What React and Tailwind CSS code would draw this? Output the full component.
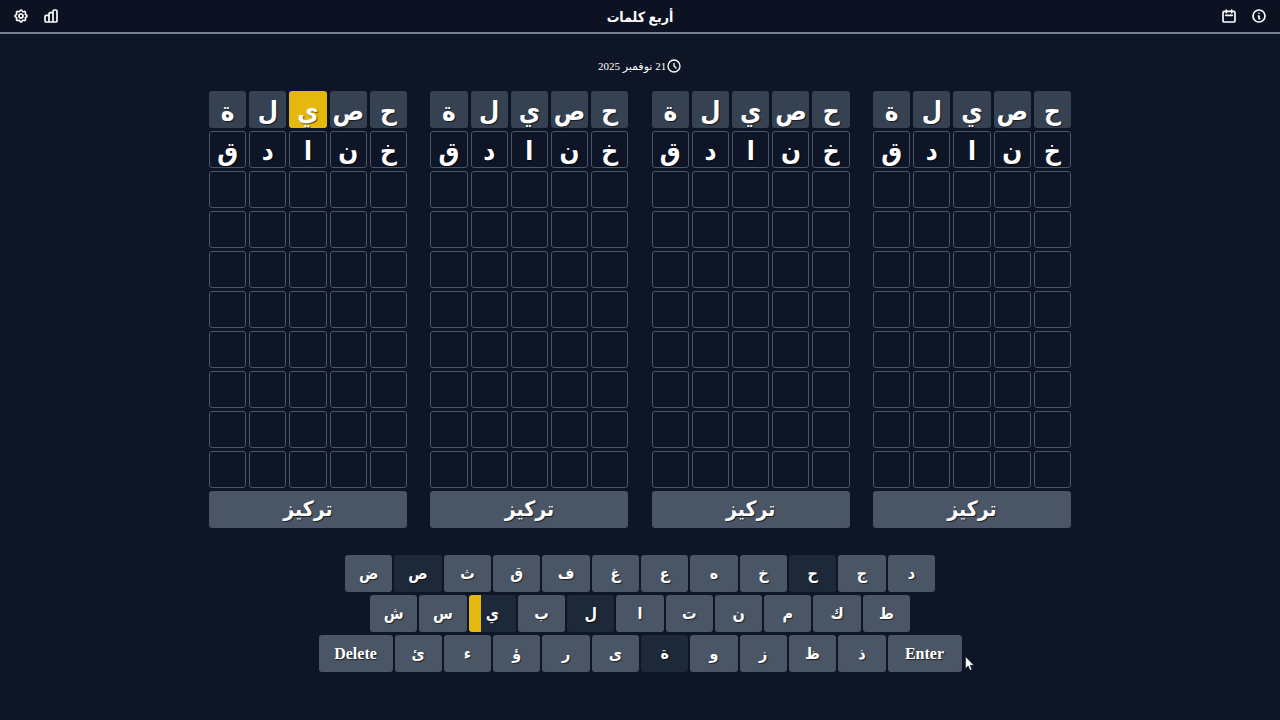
import clsx from 'clsx'
import {
  HiOutlineCalendar,
  HiOutlineChartBar,
  HiOutlineClock,
  HiOutlineCog,
  HiOutlineInformationCircle,
} from 'react-icons/hi'

const ROWS = 10
const GUESSES = ['حصيلة', 'خنادق']

// position of the misplaced letters in the first guess, per board
const BOARDS = [
  { id: 1, misplaced: [] },
  { id: 2, misplaced: [] },
  { id: 3, misplaced: [] },
  { id: 4, misplaced: [2] },
]

const USED = ['ص', 'ح', 'ل', 'ة']

const KEY_ROWS = [
  { width: 'max-w-[590px]', keys: 'دجحخهعغفقثصض' },
  { width: 'max-w-[540px]', keys: 'طكمنتالبيسش' },
  { width: 'max-w-[643px]', keys: 'ذظزوةىرؤءئ', actions: true },
]

function IconButton({ label, icon: Icon }) {
  return (
    <button type="button" aria-label={label} className="cursor-pointer">
      <Icon className="size-4 [&_path]:stroke-[2.5]" />
    </button>
  )
}

function Header() {
  return (
    <header className="flex h-[34px] items-center justify-between border-b-2 border-[#7b848e] bg-[#0c1222] px-[13px]">
      <div className="flex gap-[14px]">
        <IconButton label="معلومات" icon={HiOutlineInformationCircle} />
        <IconButton label="التاريخ" icon={HiOutlineCalendar} />
      </div>
      <h1 className="pt-1 text-sm font-bold">أربع كلمات</h1>
      <div className="flex gap-[14px]">
        <IconButton label="إحصائيات" icon={HiOutlineChartBar} />
        <IconButton label="الإعدادات" icon={HiOutlineCog} />
      </div>
    </header>
  )
}

function Cell({ letter, row, misplaced }) {
  const submitted = row === 0
  return (
    <div
      className={clsx(
        'flex h-[37px] items-center justify-center rounded-[3px] pt-1 text-[26px] leading-8 font-bold [text-shadow:1px_1px_1px_#0009]',
        !submitted && 'border border-[#4a5668]',
        submitted && !misplaced && 'bg-[#364152]',
        submitted && misplaced && 'bg-[#e5b80e]',
      )}
    >
      {letter}
    </div>
  )
}

function Board({ misplaced }) {
  return (
    <section className="grid w-[198px] gap-[3px]">
      <div className="grid grid-cols-5 gap-[3px]">
        {Array.from({ length: ROWS * 5 }, (_, i) => {
          const row = Math.floor(i / 5)
          const col = i % 5
          return (
            <Cell
              key={i}
              row={row}
              letter={GUESSES[row]?.[col]}
              misplaced={misplaced.includes(col)}
            />
          )
        })}
      </div>
      <button
        type="button"
        className="h-[37px] cursor-pointer rounded-[3px] bg-[#4a5565] text-[21px] font-bold [text-shadow:1px_1px_1px_#0009]"
      >
        تركيز
      </button>
    </section>
  )
}

function Key({ children, wide }) {
  return (
    <button
      type="button"
      className={clsx(
        'h-[37px] cursor-pointer rounded-[3px] text-base font-bold [text-shadow:1px_1px_1px_#0009]',
        wide ? 'w-[74px] shrink-0' : 'min-w-0 flex-1',
        children === 'ي'
          ? 'bg-[linear-gradient(to_right,#e5b80e_25%,#1d2838_25%)]'
          : USED.includes(children)
            ? 'bg-[#1d2838]'
            : 'bg-[#4a5565]',
      )}
    >
      {children}
    </button>
  )
}

function Pointer() {
  return (
    <svg
      className="pointer-events-none absolute top-[21px] left-full ml-[3px] h-[15px] w-[10px]"
      viewBox="0 0 10 15"
      aria-hidden="true"
    >
      <path
        d="M.5.5v12l2.700-2.500 1.900 4.300 1.900-.8-1.900-4.200h3.700z"
        fill="#fff"
        stroke="#111827"
        strokeWidth=".6"
      />
    </svg>
  )
}

function Keyboard() {
  return (
    <div className="mt-[27px] flex w-full flex-col items-center gap-[3px]">
      {KEY_ROWS.map(({ width, keys, actions }) => (
        <div key={keys} className={clsx('relative flex w-full gap-[2px]', width)}>
          {actions && <Key wide>Enter</Key>}
          {[...keys].map((letter) => (
            <Key key={letter}>{letter}</Key>
          ))}
          {actions && <Key wide>Delete</Key>}
          {actions && <Pointer />}
        </div>
      ))}
    </div>
  )
}

export default function App() {
  return (
    <div
      dir="rtl"
      className="min-h-screen bg-[#0e1526] font-['Liberation_Serif','DejaVu_Sans_Condensed','DejaVu_Sans',serif] text-white"
    >
      <Header />
      <main className="flex flex-col items-center pb-12">
        <div className="mt-6 mb-[17px] flex h-4 items-center font-['Liberation_Serif','DejaVu_Sans',serif] text-[11px]">
          <HiOutlineClock className="size-4" />
          <time dateTime="2025-11-21">21 نوفمبر 2025</time>
        </div>
        <div className="flex w-full max-w-[862px] flex-wrap justify-between gap-y-6">
          {BOARDS.map((board) => (
            <Board key={board.id} misplaced={board.misplaced} />
          ))}
        </div>
        <Keyboard />
      </main>
    </div>
  )
}
